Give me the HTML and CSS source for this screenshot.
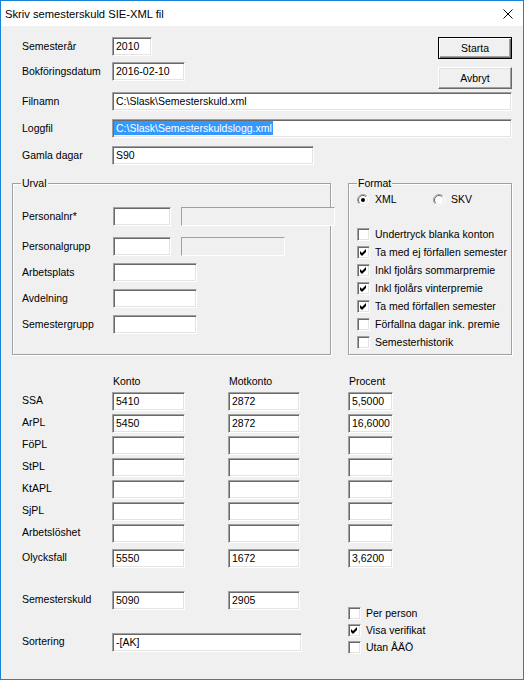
FILE: index.html
```html
<!DOCTYPE html>
<html lang="sv">
<head>
<meta charset="utf-8">
<title>Skriv semesterskuld SIE-XML fil</title>
<link rel="stylesheet" href="styles.css">
</head>
<body>
<div class="window">
  <div class="titlebar">
    <span class="title">Skriv semesterskuld SIE-XML fil</span>
    <svg class="close" width="10" height="10" viewBox="0 0 10 10"><path d="M0.5 0.5 L9.5 9.5 M9.5 0.5 L0.5 9.5" stroke="#000" stroke-width="1" fill="none"/></svg>
  </div>
  <div class="client">
    <div class="top">
      <div class="top-left">
        <div class="row"><span class="lbl">Semesterår</span><div class="tb w40">2010</div></div>
        <div class="row"><span class="lbl">Bokföringsdatum</span><div class="tb w73">2016-02-10</div></div>
      </div>
      <div class="top-right">
        <div class="btn default">Starta</div>
        <div class="btn">Avbryt</div>
      </div>
    </div>
    <div class="fields">
      <div class="row"><span class="lbl">Filnamn</span><div class="tb w400">C:\Slask\Semesterskuld.xml</div></div>
      <div class="row"><span class="lbl">Loggfil</span><div class="tb w400"><span class="sel">C:\Slask\Semesterskuldslogg.xml</span></div></div>
      <div class="row"><span class="lbl">Gamla dagar</span><div class="tb w202">S90</div></div>
    </div>
    <div class="groups">
      <div class="group urval">
        <div class="gtitle">Urval</div>
        <div class="urval-rows">
          <div class="row first"><span class="lbl2">Personalnr*</span><div class="tb w58"></div><div class="tb disabled w154"></div></div>
          <div class="row"><span class="lbl2">Personalgrupp</span><div class="tb w58"></div><div class="tb disabled w104"></div></div>
          <div class="row"><span class="lbl2">Arbetsplats</span><div class="tb w84"></div></div>
          <div class="row"><span class="lbl2">Avdelning</span><div class="tb w84"></div></div>
          <div class="row"><span class="lbl2">Semestergrupp</span><div class="tb w84"></div></div>
        </div>
      </div>
      <div class="group format">
        <div class="gtitle">Format</div>
        <div class="radios">
          <div class="radio-item">
            <svg class="radio" width="12" height="12" viewBox="0 0 12 12"><circle cx="6" cy="6" r="5.5" fill="#fff"/><path d="M2.1 9.9 A5.5 5.5 0 0 1 9.9 2.1" stroke="#a0a0a0" fill="none"/><path d="M9.9 2.1 A5.5 5.5 0 0 1 2.1 9.9" stroke="#fff" fill="none"/><path d="M2.8 9.2 A4.5 4.5 0 0 1 9.2 2.8" stroke="#696969" fill="none"/><path d="M9.2 2.8 A4.5 4.5 0 0 1 2.8 9.2" stroke="#e3e3e3" fill="none"/><circle cx="6" cy="6" r="2" fill="#000"/></svg>
            <span>XML</span>
          </div>
          <div class="radio-item">
            <svg class="radio" width="12" height="12" viewBox="0 0 12 12"><circle cx="6" cy="6" r="5.5" fill="#fff"/><path d="M2.1 9.9 A5.5 5.5 0 0 1 9.9 2.1" stroke="#a0a0a0" fill="none"/><path d="M9.9 2.1 A5.5 5.5 0 0 1 2.1 9.9" stroke="#fff" fill="none"/><path d="M2.8 9.2 A4.5 4.5 0 0 1 9.2 2.8" stroke="#696969" fill="none"/><path d="M9.2 2.8 A4.5 4.5 0 0 1 2.8 9.2" stroke="#e3e3e3" fill="none"/></svg>
            <span>SKV</span>
          </div>
        </div>
        <div class="checks">
          <div class="chk"><span class="box"></span><span>Undertryck blanka konton</span></div>
          <div class="chk"><span class="box"><svg width="7" height="7" viewBox="0 0 7 7"><polygon points="0,2 2,4 6,0 6,3 2,7 0,5" fill="#000"/></svg></span><span>Ta med ej förfallen semester</span></div>
          <div class="chk"><span class="box"><svg width="7" height="7" viewBox="0 0 7 7"><polygon points="0,2 2,4 6,0 6,3 2,7 0,5" fill="#000"/></svg></span><span>Inkl fjolårs sommarpremie</span></div>
          <div class="chk"><span class="box"><svg width="7" height="7" viewBox="0 0 7 7"><polygon points="0,2 2,4 6,0 6,3 2,7 0,5" fill="#000"/></svg></span><span>Inkl fjolårs vinterpremie</span></div>
          <div class="chk"><span class="box"><svg width="7" height="7" viewBox="0 0 7 7"><polygon points="0,2 2,4 6,0 6,3 2,7 0,5" fill="#000"/></svg></span><span>Ta med förfallen semester</span></div>
          <div class="chk"><span class="box"></span><span>Förfallna dagar ink. premie</span></div>
          <div class="chk"><span class="box"></span><span>Semesterhistorik</span></div>
        </div>
      </div>
    </div>
    <div class="table">
      <div class="trow head"><span class="lbl"></span><span class="ck">Konto</span><span class="cm">Motkonto</span><span class="cp">Procent</span></div>
      <div class="trow first"><span class="lbl tl">SSA</span><span class="ck"><span class="tb w73">5410</span></span><span class="cm"><span class="tb w72">2872</span></span><span class="tb w45">5,5000</span></div>
      <div class="trow"><span class="lbl tl">ArPL</span><span class="ck"><span class="tb w73">5450</span></span><span class="cm"><span class="tb w72">2872</span></span><span class="tb w45">16,6000</span></div>
      <div class="trow"><span class="lbl tl">FöPL</span><span class="ck"><span class="tb w73"></span></span><span class="cm"><span class="tb w72"></span></span><span class="tb w45"></span></div>
      <div class="trow"><span class="lbl tl">StPL</span><span class="ck"><span class="tb w73"></span></span><span class="cm"><span class="tb w72"></span></span><span class="tb w45"></span></div>
      <div class="trow"><span class="lbl tl">KtAPL</span><span class="ck"><span class="tb w73"></span></span><span class="cm"><span class="tb w72"></span></span><span class="tb w45"></span></div>
      <div class="trow"><span class="lbl tl">SjPL</span><span class="ck"><span class="tb w73"></span></span><span class="cm"><span class="tb w72"></span></span><span class="tb w45"></span></div>
      <div class="trow"><span class="lbl tl">Arbetslöshet</span><span class="ck"><span class="tb w73"></span></span><span class="cm"><span class="tb w72"></span></span><span class="tb w45"></span></div>
      <div class="trow last"><span class="lbl tl">Olycksfall</span><span class="ck"><span class="tb w73">5550</span></span><span class="cm"><span class="tb w72">1672</span></span><span class="tb w45">3,6200</span></div>
    </div>
    <div class="bottom">
      <div class="bottom-left">
        <div class="trow"><span class="lbl tl">Semesterskuld</span><span class="ck"><span class="tb w73">5090</span></span><span class="cm"><span class="tb w72">2905</span></span></div>
        <div class="trow sort"><span class="lbl tl">Sortering</span><span class="tb w190">-[AK]</span></div>
      </div>
      <div class="bottom-right">
        <div class="chk"><span class="box"></span><span>Per person</span></div>
        <div class="chk"><span class="box"><svg width="7" height="7" viewBox="0 0 7 7"><polygon points="0,2 2,4 6,0 6,3 2,7 0,5" fill="#000"/></svg></span><span>Visa verifikat</span></div>
        <div class="chk"><span class="box"></span><span>Utan ÅÄÖ</span></div>
      </div>
    </div>
  </div>
</div>
</body>
</html>
```
FILE: styles.css
```css
* { box-sizing: border-box; }
html, body { margin: 0; padding: 0; background: #f0f0f0; }
body {
  font-family: "Liberation Sans", Arial, sans-serif;
  font-size: 10.5px;
  color: #000;
}
.window {
  width: 524px;
  height: 680px;
  border: 1px solid #1883d7;
  background: #f0f0f0;
  overflow: hidden;
}
.titlebar {
  height: 25px;
  background: #fff;
  display: flex;
  align-items: center;
  justify-content: space-between;
  padding: 0 10px 0 4px;
}
.title { font-size: 11.2px; line-height: 16px; }
.close { display: block; }
.client { padding: 11px 11px 0 11px; }

.top { display: flex; justify-content: space-between; }
.top-left { display: flex; flex-direction: column; gap: 6px; }
.top-right { display: flex; flex-direction: column; gap: 8px; }
.row { display: flex; align-items: center; padding-left: 10px; }
.lbl { width: 90px; flex-shrink: 0; line-height: 13px; }
.lbl2 { width: 91px; flex-shrink: 0; line-height: 13px; }

.tb {
  display: block;
  height: 19px;
  background: #fff;
  border: 1px solid;
  border-color: #a0a0a0 #fff #fff #a0a0a0;
  box-shadow: inset 1px 1px 0 #696969, inset -1px -1px 0 #e3e3e3;
  padding: 0 3px;
  line-height: 17px;
  white-space: nowrap;
  overflow: hidden;
  flex-shrink: 0;
}
.tb.disabled { background: #f0f0f0; box-shadow: none; border-color: #a0a0a0 #fff #fff #a0a0a0; }
.sel {
  display: inline-block;
  background: #3399ff;
  color: #fff;
  line-height: 14px;
  margin-left: -2px;
  padding: 0 1px 0 2px;
  vertical-align: top;
  margin-top: 1px;
}
.w40 { width: 40px; }
.w45 { width: 45px; }
.w58 { width: 58px; }
.w72 { width: 72px; }
.w73 { width: 73px; }
.w84 { width: 84px; }
.w104 { width: 104px; margin-left: 10px; }
.w154 { width: 154px; margin-left: 10px; }
.w190 { width: 190px; }
.w202 { width: 202px; }
.w400 { width: 400px; }

.btn {
  width: 74px;
  height: 22px;
  background: #f0f0f0;
  border: 1px solid;
  border-color: #fff #696969 #696969 #fff;
  box-shadow: inset -1px -1px 0 #a0a0a0, inset 1px 1px 0 #e3e3e3;
  display: flex;
  align-items: center;
  justify-content: center;
  line-height: 13px;
}
.btn.default {
  border-color: #000;
  box-shadow: inset 1px 1px 0 #fff, inset -1px -1px 0 #696969, inset -2px -2px 0 #a0a0a0;
}

.fields { margin-top: 3px; display: flex; flex-direction: column; gap: 8px; }

.groups { margin-top: 18px; display: flex; justify-content: space-between; }
.group {
  height: 172px;
  border: 1px solid #a0a0a0;
  box-shadow: inset 1px 1px 0 #fff, 1px 1px 0 #fff;
  display: flex;
  flex-direction: column;
  align-items: flex-start;
}
.urval { width: 319px; padding-left: 9px; }
.format { width: 164px; padding-left: 8px; }
.gtitle {
  margin: -7px 0 0 8px;
  padding: 0 1px;
  background: #f0f0f0;
  line-height: 13px;
  height: 13px;
}
.urval .gtitle { margin-left: -1px; }
.format .gtitle { margin-left: 0; }
.urval-rows { margin-top: 17px; display: flex; flex-direction: column; gap: 7px; }
.urval-rows .row { padding-left: 0; }
.urval-rows .row.first { margin-bottom: 4px; }

.radios { margin-top: 3px; display: flex; }
.radio-item { width: 76px; display: flex; align-items: center; gap: 6px; line-height: 13px; height: 13px; }
.radio { display: block; }

.checks { margin-top: 22px; display: flex; flex-direction: column; gap: 5px; }
.chk { display: flex; align-items: center; gap: 5px; height: 13px; line-height: 13px; white-space: nowrap; }
.box {
  width: 13px;
  height: 13px;
  flex-shrink: 0;
  background: #fff;
  border: 1px solid;
  border-color: #a0a0a0 #fff #fff #a0a0a0;
  box-shadow: inset 1px 1px 0 #696969, inset -1px -1px 0 #e3e3e3;
  padding: 2px;
}
.box svg { display: block; }

.table { margin-top: 20px; padding-left: 10px; }
.trow { display: flex; align-items: center; margin-top: 3px; }
.trow.head { margin-top: 0; line-height: 13px; height: 13px; }
.trow.head .ck, .trow.head .cm, .trow.head .cp { padding-left: 1px; }
.trow.first { margin-top: 4px; }
.trow.last { margin-top: 6px; }
.ck { width: 116px; flex-shrink: 0; }
.cm { width: 120px; flex-shrink: 0; }
.cp { width: 45px; }
.tl { padding-bottom: 3px; }

.bottom { margin-top: 23px; display: flex; }
.bottom-left { width: 336px; padding-left: 10px; }
.bottom-left .trow:first-child { margin-top: 0; }
.trow.sort { margin-top: 23px; }
.bottom-right { margin-top: 16px; display: flex; flex-direction: column; gap: 4px; }
```
